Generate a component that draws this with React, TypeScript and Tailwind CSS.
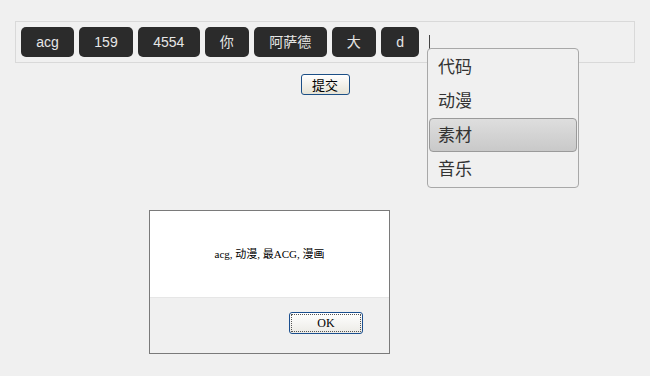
const tags = ["acg", "159", "4554", "你", "阿萨德", "大", "d"]
const options = ["代码", "动漫", "素材", "音乐"]

export default function App() {
  return (
    <div className="relative min-h-[376px] bg-[#f0f0f0] pt-[21px] px-[15px] font-['Liberation_Sans','Noto_Sans_CJK_SC',sans-serif]">
      {/* Tag input */}
      <div className="relative flex h-[42px] items-center gap-[5px] border border-[#d9d9d9] pl-[5px]">
        {tags.map((t) => (
          <span
            key={t}
            className="flex h-[30px] items-center rounded-[5px] bg-[#2b2b2b] px-[15.25px] text-[14px] text-[#e6e6e6]"
          >
            {t}
          </span>
        ))}
        <span className="ml-[5px] h-[14px] w-px bg-[#444]" />

        {/* Suggestion menu */}
        <ul className="absolute left-[411px] top-[26px] z-10 w-[152px] rounded-[4px] border border-[#a8a8a8] bg-[#f0f0f0] p-[1px]">
          {options.map((o) => (
            <li
              key={o}
              className={
                o === "素材"
                  ? "flex h-[34px] items-center rounded-[4px] border border-[#9a9a9a] bg-gradient-to-b from-[#dedede] to-[#c9c9c9] pl-[8px] pt-[1px] text-[17px] text-[#333]"
                  : "flex h-[34px] items-center border border-transparent pl-[8px] pt-[1px] text-[17px] text-[#333]"
              }
            >
              {o}
            </li>
          ))}
        </ul>
      </div>

      <div className="mt-[11px] flex justify-center">
        <button className="h-[21px] w-[49px] rounded-[3px] border border-[#1c4f86] bg-gradient-to-b from-[#ffffff] to-[#e6e3d6] text-[13px] leading-none text-black font-['Noto_Sans_CJK_SC',sans-serif]">
          提交
        </button>
      </div>

      {/* Alert dialog */}
      <div className="absolute left-[149px] top-[210px] flex h-[144px] w-[241px] flex-col border border-[#7a7a7a] bg-[#f0f0f0]">
        <div className="flex h-[87px] items-center justify-center border-b border-[#e6e6e6] bg-white pt-[1px] text-[11px] text-black font-['Liberation_Serif','Noto_Sans_CJK_SC',serif]">
          acg, 动漫, 最ACG, 漫画
        </div>
        <div className="flex flex-1 justify-end pr-[26px] pt-[14px]">
          <button className="h-[22px] w-[74px] rounded-[3px] border border-[#1b4f8f] bg-gradient-to-b from-[#ffffff] to-[#ecebe6] p-[1px]">
            <span className="flex h-full w-full items-center justify-center border border-dotted border-[#555] text-[12px] text-black font-['Liberation_Serif',serif]">
              OK
            </span>
          </button>
        </div>
      </div>
    </div>
  )
}
